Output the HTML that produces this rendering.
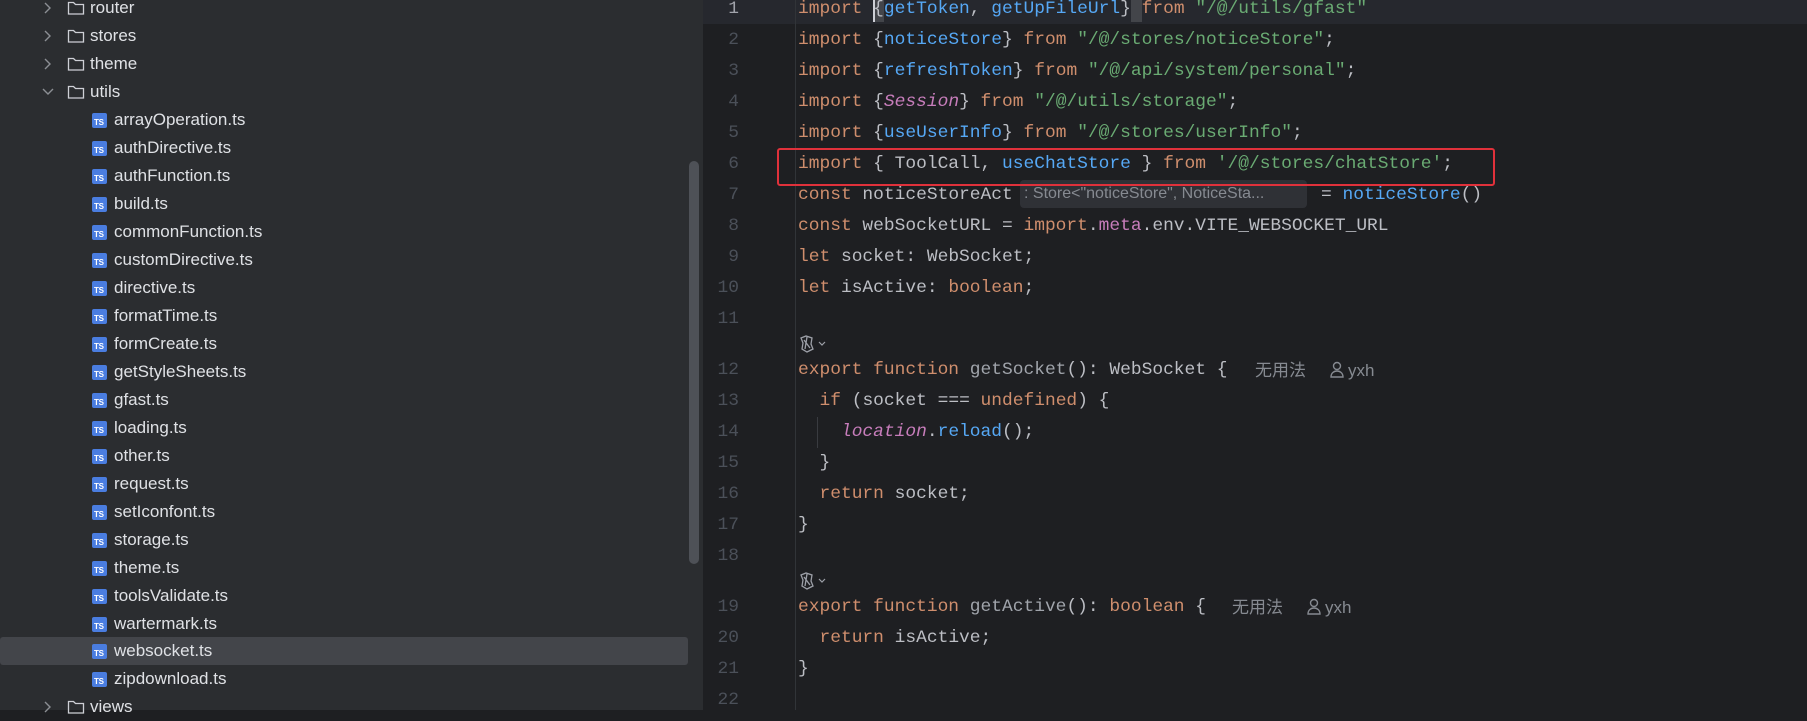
<!DOCTYPE html>
<html><head><meta charset="utf-8"><style>
*{margin:0;padding:0;box-sizing:border-box}
html,body{width:1807px;height:710px;overflow:hidden;background:#1e1f22}
#side{position:absolute;left:0;top:0;width:703px;height:710px;background:#2b2d30;font-family:"Liberation Sans",sans-serif;font-size:17px;color:#dfe1e5}
.row{position:absolute;left:0;height:28px;line-height:28px;width:688px;white-space:nowrap}
.sel{background:#43454a;border-radius:3px}
.chev{position:absolute;left:42px;top:8px}
.fold{position:absolute;left:67px;top:6px}
.ts{position:absolute;left:92px;top:7px;width:15px;height:15px;background:#4a7de0;border-radius:2px;color:#fff;font-size:8px;font-weight:bold;line-height:8px;padding:6px 0 0 2px;font-family:"Liberation Sans",sans-serif;letter-spacing:-0.3px}
.ft{position:absolute;left:114px}
.dt{position:absolute;left:90px}
#sb{position:absolute;left:689px;top:161px;width:10px;height:403px;background:#4e5157;border-radius:5px}
#ed{position:absolute;left:703px;top:0;width:1104px;height:710px;background:#1e1f22}
.ln{position:absolute;left:703px;width:36px;text-align:right;font-family:"Liberation Mono",monospace;font-size:17.9px;color:#4b5059;line-height:31px}
.cl{position:absolute;left:798px;font-family:"Liberation Mono",monospace;font-size:17.9px;line-height:31px;white-space:pre;color:#bcbec4}
.k{color:#cf8e6d}.b{color:#56a8f5}.s{color:#6aab73}.p{color:#c77dbb}.i{font-style:italic}.g{color:#a0a4ab}
.lens{position:absolute;font-family:"Liberation Sans","Noto Sans CJK SC",sans-serif;font-size:17px;color:#868a91;line-height:31px;white-space:nowrap}
</style></head><body>
<div id="side">
<div class="row" style="top:-6px"><svg class="chev" width="10" height="12"><path d="M3 1l5 5-5 5" stroke="#8c8f94" stroke-width="1.4" fill="none"/></svg><svg class="fold" width="18" height="16"><path d="M1.5 2.5h5l2 2h8v9.5h-15z" stroke="#ced0d6" stroke-width="1.3" fill="none"/></svg><span class="dt">router</span></div>
<div class="row" style="top:22px"><svg class="chev" width="10" height="12"><path d="M3 1l5 5-5 5" stroke="#8c8f94" stroke-width="1.4" fill="none"/></svg><svg class="fold" width="18" height="16"><path d="M1.5 2.5h5l2 2h8v9.5h-15z" stroke="#ced0d6" stroke-width="1.3" fill="none"/></svg><span class="dt">stores</span></div>
<div class="row" style="top:50px"><svg class="chev" width="10" height="12"><path d="M3 1l5 5-5 5" stroke="#8c8f94" stroke-width="1.4" fill="none"/></svg><svg class="fold" width="18" height="16"><path d="M1.5 2.5h5l2 2h8v9.5h-15z" stroke="#ced0d6" stroke-width="1.3" fill="none"/></svg><span class="dt">theme</span></div>
<div class="row" style="top:78px"><svg class="chev" width="12" height="12"><path d="M1 3l5 5 5-5" stroke="#8c8f94" stroke-width="1.4" fill="none"/></svg><svg class="fold" width="18" height="16"><path d="M1.5 2.5h5l2 2h8v9.5h-15z" stroke="#ced0d6" stroke-width="1.3" fill="none"/></svg><span class="dt">utils</span></div>
<div class="row" style="top:106px"><span class="ts">TS</span><span class="ft">arrayOperation.ts</span></div>
<div class="row" style="top:134px"><span class="ts">TS</span><span class="ft">authDirective.ts</span></div>
<div class="row" style="top:162px"><span class="ts">TS</span><span class="ft">authFunction.ts</span></div>
<div class="row" style="top:190px"><span class="ts">TS</span><span class="ft">build.ts</span></div>
<div class="row" style="top:218px"><span class="ts">TS</span><span class="ft">commonFunction.ts</span></div>
<div class="row" style="top:246px"><span class="ts">TS</span><span class="ft">customDirective.ts</span></div>
<div class="row" style="top:274px"><span class="ts">TS</span><span class="ft">directive.ts</span></div>
<div class="row" style="top:302px"><span class="ts">TS</span><span class="ft">formatTime.ts</span></div>
<div class="row" style="top:330px"><span class="ts">TS</span><span class="ft">formCreate.ts</span></div>
<div class="row" style="top:358px"><span class="ts">TS</span><span class="ft">getStyleSheets.ts</span></div>
<div class="row" style="top:386px"><span class="ts">TS</span><span class="ft">gfast.ts</span></div>
<div class="row" style="top:414px"><span class="ts">TS</span><span class="ft">loading.ts</span></div>
<div class="row" style="top:442px"><span class="ts">TS</span><span class="ft">other.ts</span></div>
<div class="row" style="top:470px"><span class="ts">TS</span><span class="ft">request.ts</span></div>
<div class="row" style="top:498px"><span class="ts">TS</span><span class="ft">setIconfont.ts</span></div>
<div class="row" style="top:526px"><span class="ts">TS</span><span class="ft">storage.ts</span></div>
<div class="row" style="top:554px"><span class="ts">TS</span><span class="ft">theme.ts</span></div>
<div class="row" style="top:582px"><span class="ts">TS</span><span class="ft">toolsValidate.ts</span></div>
<div class="row" style="top:610px"><span class="ts">TS</span><span class="ft">wartermark.ts</span></div>
<div class="row sel" style="top:637px"><span class="ts">TS</span><span class="ft">websocket.ts</span></div>
<div class="row" style="top:665px"><span class="ts">TS</span><span class="ft">zipdownload.ts</span></div>
<div class="row" style="top:693px"><svg class="chev" width="10" height="12"><path d="M3 1l5 5-5 5" stroke="#8c8f94" stroke-width="1.4" fill="none"/></svg><svg class="fold" width="18" height="16"><path d="M1.5 2.5h5l2 2h8v9.5h-15z" stroke="#ced0d6" stroke-width="1.3" fill="none"/></svg><span class="dt">views</span></div>
<div id="sb"></div>
</div>
<div id="ed"></div>
<div style="position:absolute;left:703px;top:-6px;width:1104px;height:30px;background:#26282e"></div>
<div style="position:absolute;left:795px;top:0;width:1px;height:710px;background:#313438"></div>

<div class="ln" style="top:-6px;color:#a1a3ab">1</div>
<div class="ln" style="top:25px">2</div>
<div class="ln" style="top:56px">3</div>
<div class="ln" style="top:87px">4</div>
<div class="ln" style="top:118px">5</div>
<div class="ln" style="top:149px">6</div>
<div class="ln" style="top:180px">7</div>
<div class="ln" style="top:211px">8</div>
<div class="ln" style="top:242px">9</div>
<div class="ln" style="top:273px">10</div>
<div class="ln" style="top:304px">11</div>
<div class="ln" style="top:355px">12</div>
<div class="ln" style="top:386px">13</div>
<div class="ln" style="top:417px">14</div>
<div class="ln" style="top:448px">15</div>
<div class="ln" style="top:479px">16</div>
<div class="ln" style="top:510px">17</div>
<div class="ln" style="top:541px">18</div>
<div class="ln" style="top:592px">19</div>
<div class="ln" style="top:623px">20</div>
<div class="ln" style="top:654px">21</div>
<div class="ln" style="top:685px">22</div>

<div style="position:absolute;left:873px;top:-2px;width:11px;height:24px;background:#43454a"></div>
<div style="position:absolute;left:1131px;top:-2px;width:11px;height:24px;background:#43454a"></div>
<div style="position:absolute;left:873px;top:-2px;width:2px;height:24px;background:#ced0d6"></div>

<div class="cl" style="top:-6px"><span class="k">import</span> {<span class="b">getToken</span>, <span class="b">getUpFileUrl</span>} <span class="k">from</span> <span class="s">"/@/utils/gfast"</span></div>
<div class="cl" style="top:25px"><span class="k">import</span> {<span class="b">noticeStore</span>} <span class="k">from</span> <span class="s">"/@/stores/noticeStore"</span>;</div>
<div class="cl" style="top:56px"><span class="k">import</span> {<span class="b">refreshToken</span>} <span class="k">from</span> <span class="s">"/@/api/system/personal"</span>;</div>
<div class="cl" style="top:87px"><span class="k">import</span> {<span class="p i">Session</span>} <span class="k">from</span> <span class="s">"/@/utils/storage"</span>;</div>
<div class="cl" style="top:118px"><span class="k">import</span> {<span class="b">useUserInfo</span>} <span class="k">from</span> <span class="s">"/@/stores/userInfo"</span>;</div>
<div class="cl" style="top:149px"><span class="k">import</span> { ToolCall, <span class="b">useChatStore</span> } <span class="k">from</span> <span class="s">'/@/stores/chatStore'</span>;</div>
<div class="cl" style="top:180px"><span class="k">const</span> noticeStoreAct</div>
<div style="position:absolute;left:1020px;top:180px;width:287px;height:28px;background:#2f3136;border-radius:4px;font-family:'Liberation Sans',sans-serif;font-size:16px;color:#868a91;line-height:28px;padding-left:4px;white-space:nowrap;overflow:hidden">: Store&lt;"noticeStore", NoticeSta...</div>
<div class="cl" style="top:180px;left:1321px">= <span class="b">noticeStore</span>()</div>
<div class="cl" style="top:211px"><span class="k">const</span> webSocketURL = <span class="k">import</span>.<span class="p">meta</span>.env.VITE_WEBSOCKET_URL</div>
<div class="cl" style="top:242px"><span class="k">let</span> socket: WebSocket;</div>
<div class="cl" style="top:273px"><span class="k">let</span> isActive: <span class="k">boolean</span>;</div>

<svg style="position:absolute;left:798px;top:334px" width="30" height="20"><path d="M3 4l5-2 6 2-1 6 2 5-6 3-5-3 1-6z M6 6l6 8 M9 3l-2 12" stroke="#9da0a8" stroke-width="1.3" fill="none"/><path d="M21 8l3 3 3-3" stroke="#9da0a8" stroke-width="1.2" fill="none"/></svg>
<div class="cl" style="top:355px"><span class="k">export function</span> <span class="g">getSocket</span>(): WebSocket {</div>
<div class="lens" style="top:355px;left:1255px">无用法</div>
<svg style="position:absolute;left:1329px;top:361px" width="16" height="18"><circle cx="8" cy="5" r="3.5" stroke="#868a91" stroke-width="1.4" fill="none"/><path d="M2 16c0-4 3-6 6-6s6 2 6 6z" stroke="#868a91" stroke-width="1.4" fill="none"/></svg>
<div class="lens" style="top:355px;left:1348px">yxh</div>
<div class="cl" style="top:386px">  <span class="k">if</span> (socket === <span class="k">undefined</span>) {</div>
<div style="position:absolute;left:817px;top:417px;width:1px;height:31px;background:#393b40"></div>
<div class="cl" style="top:417px">    <span class="p i">location</span>.<span class="b">reload</span>();</div>
<div class="cl" style="top:448px">  }</div>
<div class="cl" style="top:479px">  <span class="k">return</span> socket;</div>
<div class="cl" style="top:510px">}</div>

<svg style="position:absolute;left:798px;top:571px" width="30" height="20"><path d="M3 4l5-2 6 2-1 6 2 5-6 3-5-3 1-6z M6 6l6 8 M9 3l-2 12" stroke="#9da0a8" stroke-width="1.3" fill="none"/><path d="M21 8l3 3 3-3" stroke="#9da0a8" stroke-width="1.2" fill="none"/></svg>
<div class="cl" style="top:592px"><span class="k">export function</span> <span class="g">getActive</span>(): <span class="k">boolean</span> {</div>
<div class="lens" style="top:592px;left:1232px">无用法</div>
<svg style="position:absolute;left:1306px;top:598px" width="16" height="18"><circle cx="8" cy="5" r="3.5" stroke="#868a91" stroke-width="1.4" fill="none"/><path d="M2 16c0-4 3-6 6-6s6 2 6 6z" stroke="#868a91" stroke-width="1.4" fill="none"/></svg>
<div class="lens" style="top:592px;left:1325px">yxh</div>
<div class="cl" style="top:623px">  <span class="k">return</span> isActive;</div>
<div class="cl" style="top:654px">}</div>

<div style="position:absolute;left:777px;top:148px;width:718px;height:38px;border:2px solid #e0313b;border-radius:3px"></div>
</body></html>
